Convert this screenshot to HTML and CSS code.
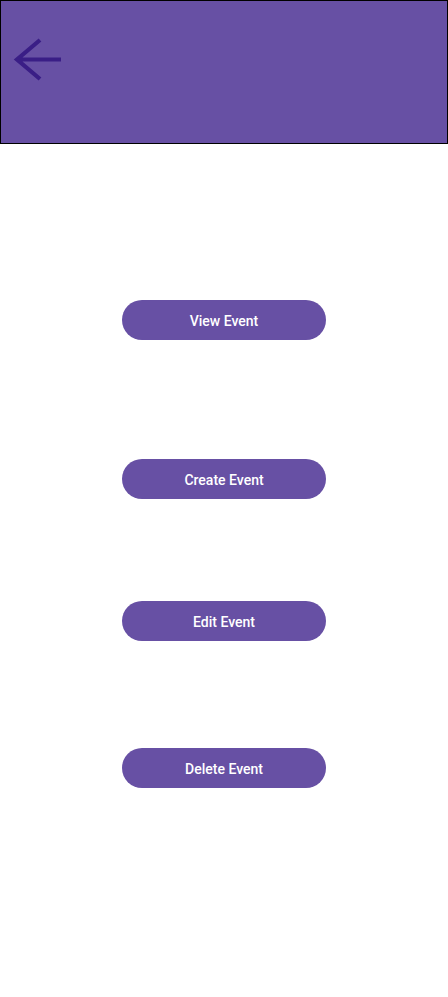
FILE: index.html
```html
<!DOCTYPE html>
<html>
<head>
<meta charset="utf-8">
<link rel="stylesheet" href="styles.css">
</head>
<body>
<header class="appbar">
  <svg class="back" width="50" height="46" viewBox="0 0 50 46">
    <path d="M48 21.5H4 M27 2 L4 21.5 L27 41" fill="none" stroke="#3a1e86" stroke-width="4.2"/>
  </svg>
</header>
<main class="actions">
  <button class="btn btn-view">View Event</button>
  <button class="btn btn-create">Create Event</button>
  <button class="btn btn-edit">Edit Event</button>
  <button class="btn btn-delete">Delete Event</button>
</main>
</body>
</html>
```
FILE: styles.css
```css
html, body {
  margin: 0;
  padding: 0;
  background: #ffffff;
  font-family: Roboto, "Noto Sans", sans-serif;
}
.appbar {
  box-sizing: border-box;
  height: 144px;
  background: #6750a4;
  border: 1px solid #000;
  padding: 37px 0 0 12px;
}
.back {
  display: block;
}
.actions {
  display: flex;
  flex-direction: column;
  align-items: center;
}
.btn {
  width: 204px;
  height: 40px;
  border: none;
  border-radius: 20px;
  background: #6750a4;
  color: #ffffff;
  font-family: Roboto, "Noto Sans", sans-serif;
  font-weight: 500;
  font-size: 14px;
  padding: 2px 0 0 0;
}
.btn-view { margin-top: 156px; }
.btn-create { margin-top: 119px; }
.btn-edit { margin-top: 102px; }
.btn-delete { margin-top: 107px; }
```
